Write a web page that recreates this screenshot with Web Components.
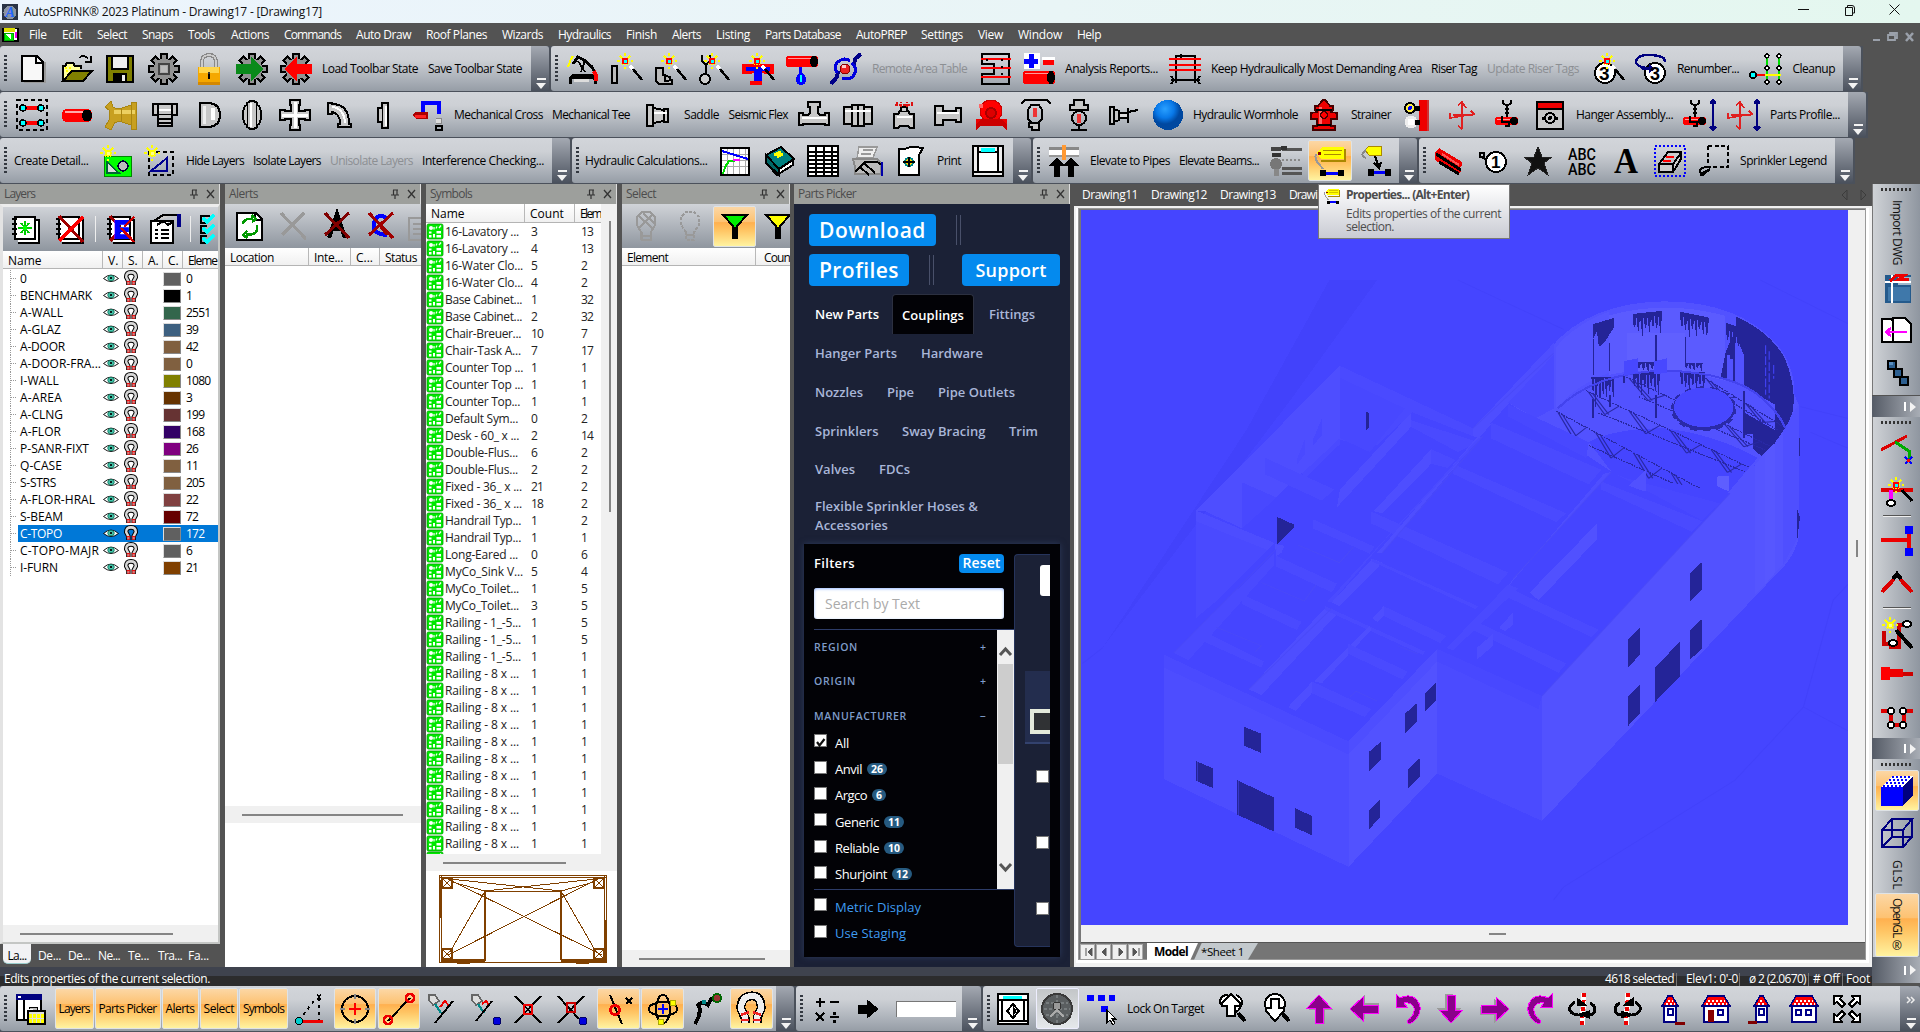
<!DOCTYPE html>
<html lang="en">
<head>
<meta charset="utf-8">
<title>AutoSPRINK</title>
<style>
html,body{margin:0;padding:0;width:1920px;height:1032px;overflow:hidden;background:#535353}
</style>
</head>
<body>
<sp-app></sp-app>
<script>
const FONT = 'font:12px/16px "Open Sans","Noto Sans",sans-serif;';
const P = (d,f='none',s='none',w=2,x='') => `<path d="${d}" fill="${f}" stroke="${s}" stroke-width="${w}" ${x}/>`;
const K = (d,f='none',w=2,x='') => P(d,f,'#000',w,x);
const C = (x,y,r,f='none',s='#000',w=2,e='') => `<circle cx="${x}" cy="${y}" r="${r}" fill="${f}" stroke="${s}" stroke-width="${w}" ${e}/>`;
const E = (x,y,a,b,f='none',s='#000',w=2) => `<ellipse cx="${x}" cy="${y}" rx="${a}" ry="${b}" fill="${f}" stroke="${s}" stroke-width="${w}"/>`;
const R = (x,y,w,h,f,s='none',k=2) => `<rect x="${x}" y="${y}" width="${w}" height="${h}" fill="${f}" stroke="${s}" stroke-width="${k}"/>`;
const burst = (x,y) => P(`M${x} ${y-8}V${y+8}M${x-8} ${y}H${x+8}M${x-5} ${y-5}L${x+5} ${y+5}M${x+5} ${y-5}L${x-5} ${y+5}`,'none','#ff0',2,'stroke-dasharray="3 1.5"')+R(x-3,y-3,6,6,'#f00')+R(x-1,y-1,3,3,'#0ff');
const wand = (x,y) => burst(x,y)+P(`M${x+5} ${y+5}L${x+8} ${y+8}`,'none','#fff',3)+K(`M${x+8} ${y+8}L${x+17} ${y+19}`,'none',2.5);
const teeth = [0,45,90,135,180,225,270,315].map(a=>`<path d="M13 7V1H19V7" fill="#929292" stroke="#000" stroke-width="1.800" transform="rotate(${a} 16 16)"/>`).join('');
const gear = teeth+C(16,16,9.5,'#929292','#929292',2);
const M = '#c8c8c8';
const pipe = (x,y,w,h=8) => `<rect x="${x}" y="${y}" width="${w}" height="${h}" rx="3" fill="#f00"/><rect x="${x+2}" y="${y+1.5}" width="${w-6}" height="1.6" fill="#f99"/><ellipse cx="${x+w-4}" cy="${y+h/2}" rx="4" ry="${h/2}" fill="#000"/>`;
const arrow = (rot) => `<g transform="rotate(${rot} 16 16)">${P('M17 3L30 17H22V31H14V17H6Z','#9a9a9a','none',1)}${P('M16 2L28 15H20V30H12V15H4Z','#8a008a','#f0f',1)}</g>`;
const hook = (m) => `<g ${m?'transform="matrix(-1 0 0 1 32 0)"':''}>${P('M4 11L4 1L8 5Q18 0 25 7Q31 15 26 23Q23 29 17 31Q14 29 16 27Q23 22 22 15Q20 9 12 10L15 14H4Z','#8a008a','#f0f',1)}</g>`;
const house = (x,w,extra='') => P(`M${x} 13V29H${x+w}V13`,'#fff','#000080',2)+P(`M${x-2} 13L${x+4} 3H${x+w-4}L${x+w+2} 13Z`,'#f00','#000080',1.5)+P(`M${x+2} 11H${x+w-1}M${x+4} 8H${x+w-3}`,'none','#fff',1.5,'stroke-dasharray="2 2"')+extra;
const book = K('M9 7H30V30H9','#fff')+K('M6 4H26V26H6Z','#fff')+K('M3 6H8M3 11H8M3 16H8M3 21H8');
const rx = P('M6 3L30 29','none','#a00000',3)+P('M30 4L6 28','none','#f00',3);
const hang = (dx=0) => `<g transform="translate(${dx} 0)">`+K('M12 1V4L16 7L20 4V1M16 7V21','none',2)+K('M14 10H18M14 14H18','none',1.5)+pipe(4,18,23,8)+K('M11 17V23H18V27H14','none',1.6)+'</g>';
const axes = (dx=0)=>P(`M${16+dx} 3V30M${4+dx} 19L${28+dx} 15M${7+dx} 16H${27+dx}M${12+dx} 6L${16+dx} 3L${20+dx} 9M${12+dx} 27L${16+dx} 30M${4+dx} 14V20M${25+dx} 12L${29+dx} 16`,'none','#e02020',1.6);
const dim = P('M29 1V31M26 4L29 1L32 4M26 28L29 31L32 28M26 28H32M26 4H32','none','#000080',1.8);
const pale = s => s.replace('#f00','#ff0').replace('#0ff','#ff8');
const I = {
new:P('M7 29H28V9','none','#999',2)+K('M5 3H20L26 9V28H5Z','#f8f8f8')+K('M19 3V10H26','none'),
open:K('M2 28V13H4L6 10H12L14 13H20V16','#ff9')+P('M4 15H12M5 18H10','none','#ff0',2,'stroke-dasharray="2 2"')+K('M2 28L11 18H31L22 28Z','#808000')+K('M18 5Q22 1 27 5M30 3V9H24','none',1.8),
save:K('M3 3H29V29H3Z','#808000')+K('M8 3H24V16H8Z','#eee')+R(9,20,14,9,'#000')+R(18,22,3,6,'#eee'),
gear:gear+R(11,11,10,10,'#aaa','#444',1.5)+R(13,13,6,6,'#bbb'),
lock:P('M9 15V9Q9 2 16 2T23 9V15','none','#888',4)+P('M9 15V9Q9 2 16 2T23 9V15','none','#ccc',1.5)+R(5,14,22,18,'#f5a800')+R(6,14,20,6,'#ffd54a')+R(5,29,22,3,'#d48800')+K('M16 20V26','none',2)+C(16,20,1.5,'#333','none'),
gearG:gear+P('M0 11H15V4L28 16L15 28V21H0Z','#0a8a1a','none'),
gearR:gear+P('M32 11H17V4L4 16L17 28V21H32Z','#f00','none'),
cart:K('M3 31V26L7 22H24L28 26V31','none',3)+R(7,25,15,4,'#ddd')+K('M3 24H27','none',3)+P('M1 14L4 6L6 3','none','#ff0',2)+K('M6 11L11 4L17 7L25 14L27 18','none',3)+K('M11 8L18 19M18 8L14 19','none',1.8)+P('M27 18L29 23V28','none','#f00',4),
wand1:K('M2 13H7V30H2Z','#bbb')+wand(15,8),
wand2:K('M2 15H9V22L16 24V27H18V31H6Q2 31 2 25Z','#bbb')+K('M11 21V28H15','none')+wand(15,8),
wand3:K('M4 2V8L8 12V20M12 2V8L8 12','none',1.6)+C(7,26,5,'#ccc')+wand(14,8),
wand4:P('M0 11H32V21H22V20H10V21H0Z','#f00')+P('M4 14H28V18H20V29H12V18H4Z','#00f')+R(8,28,12,4,'#f00')+wand(15,8),
drop:pipe(0,3,32,11)+P('M14 14V20','none','#00f',3)+P('M15 18Q9 24 10 28T15 32T20 28T15 18Z','#00f')+P('M15 22V29','none','#0ff',2),
orbit:P('M31 1L25 6L24 12M1 31L7 24L8 18','none','#008',4)+P('M7 20Q3 12 9 8T20 8M12 25Q20 28 24 22T22 10','none','#00d',3)+C(15,16,5,'#e22','#800',1)+R(12,12,4,3,'#fcc'),
sheets:K('M3 1H30V31H3V21H15V11H3Z')+P('M2 6H32M2 15H32M2 24H32','none','#f00',2)+K('M8 6V12M23 6V26','none',1.5,'stroke-dasharray="2 5"'),
plusmin:R(1,0,16,16,'#fff')+P('M8 1V15M1 8H15','none','#00f',5)+R(19,4,13,3,'#fff')+P('M20 9H31','none','#f00',5)+pipe(0,18,32,13),
demand:K('M7 30V3H26V30M12 1V6M2 27H31M2 23L5 27L2 31M31 23L28 27L31 31')+P('M0 6H32M0 12H32M0 17H32','none','#f00',1.8),
three:C(14,20,10,'#fff','#000')+'<text x="8" y="27" font-family="Liberation Sans" font-weight="bold" font-size="19">3</text>'+wand(16,8),
three2:P('M1 10Q1 1 16 2T30 9M1 10Q4 15 14 15','none','#000080',2.5)+C(20,20,10,'#fff','#000')+P('M4 14H14V11L20 16L14 20V17H8Z','#000080')+'<text x="15" y="27" font-family="Liberation Sans" font-weight="bold" font-size="18">3</text>',
cleanup:P('M16 4V28M28 4V28','none','#0d0',2)+P('M4 22H16','none','#f00',2.5)+P('M14 22H30','none','#ff0',2.5)+C(2,22,3,'#0ff','#000',1.5)+[[16,3],[28,3],[16,15],[28,15],[16,29],[28,29]].map(a=>C(a[0],a[1],2,'#fff','#000',1.2)).join(''),
selpipe:K('M1 1H31V31H1Z','none',2,'stroke-dasharray="4 3"')+P('M8 9H25M8 24H25','none','#f00',4)+[[7,9],[25,9],[7,24],[25,24]].map(a=>C(a[0],a[1],3,'#0ff','#000',1.4)).join(''),
pipe:`<rect x="1" y="10" width="30" height="13" rx="5" fill="#f00"/><rect x="4" y="12" width="20" height="2" fill="#faa"/><ellipse cx="26" cy="16.500" rx="5" ry="6" fill="#000"/>`,
brass:P('M8 8Q10 10 17 9L26 6V3H31V30H26V26L17 23Q10 22 9 25L6 31L0 28L4 21V11L0 8L6 2Z','#c8a020','#a98612',1)+P('M9 13H30','none','#ecd060',4)+P('M26 5V28M16 10V22','none','#a98612',1),
sleeve:K('M5 5H29V16H5Z',M)+K('M10 6V15M24 6V15M10 16V27H24V16M10 20H24M10 24H24',M)+R(11,10,12,2,'#fff'),
cap:K('M7 4H16Q27 5 27 16T16 28H7Z',M)+R(10,7,3,18,'#eee')+R(18,9,4,12,'#fff'),
disc:K('M11 4Q16 0 21 4V28Q16 32 11 28Z',M)+K('M11 6Q7 7 7 16T11 26M21 6Q25 7 25 16T21 26',M)+R(14,4,2,24,'#fff'),
cross:K('M11 1H21V6H20V12H26V11H31V21H26V20H20V26H21V31H11V26H12V20H6V21H1V11H6V12H12V6H11Z',M)+P('M16 3V29M3 16H29','none','#fff',3),
elbow:K('M4 4H8V5Q25 5 25 25H27V28H14V25H16Q16 14 8 13V15H4Z',M)+P('M8 8Q20 9 21 24','none','#fff',2),
flange:K('M14 4H20V29H14Z',M)+K('M14 9H10V23H14',M)+R(17,7,2,20,'#fff'),
uhook:P('M0 16L4 13H16V20H4Z','#a00')+P('M3 17H14','none','#f22',3)+P('M11 13V4H27V15','none','#00f',4)+K('M24 27H30V31H24Z','none',1.5)+P('M24 19H29V24H24','#ddd','#888',1),
coup:K('M6 6H12V27H6ZM12 9L23 11V22L12 24Z',M)+K('M23 10H27V23H23Z',M)+P('M13 14H26','none','#fff',2),
tee:K('M10 3H22V8H20V12Q20 16 24 16H27V14H31V26H27V25H5V26H1V14H5V16H8Q12 16 12 12V8H10Z',M)+P('M4 19H29','none','#fff',2.5),
reduc:K('M2 8H10V6H22V8H30V25H22V27H10V25H2Z',M)+K('M10 8V25M16 6V27M22 8V25','none',1.8)+P('M3 12H29','none','#fff',2),
valveR:K('M6 15H10L12 12H20L22 15H26V29H22L20 27H12L10 29H6Z',M)+K('M13 12V8H19V12',M)+P('M7 6H25M9 3V5M13 8V3M19 8V3M24 3V5','none','#d11',2,'stroke-dasharray="3 1"')+P('M9 18H24','none','#fff',2),
nipple:K('M3 7H11V12H24V9H29V23H24V21H11V26H3Z',M)+P('M5 14H27','none','#fff',2),
fan:C(15,12,11,'#f00','#c00',1)+R(0,20,31,5,'#e00')+P('M0 31V25L6 20H25L31 25V31L26 27H5Z','#c00')+C(15,14,5,'#d00','#a00',2)+R(3,5,4,4,'#f66'),
spk:K('M2 5L6 1H28L32 5M12 6H20L23 11V20L19 24H13L9 20V11Z','none')+R(14,9,4,9,'#e33')+K('M12 24H20V31H13V28H10V24Z',M),
spk2:K('M11 1H21V6H25V11H7V6H11Z',M)+C(16,19,7,'none')+R(14,15,4,9,'#e33')+K('M16 26V31M8 31H24','none'),
side:K('M4 8H8V25H4ZM8 10L13 12V21L8 23Z',M)+K('M13 14H22V19H13ZM22 9V24M22 13L32 11','#ddd'),
ball:'<defs><radialGradient id="b" cx=".4" cy=".3"><stop offset="0" stop-color="#2aa0ff"/><stop offset=".6" stop-color="#0878e8"/><stop offset="1" stop-color="#0048a0"/></radialGradient></defs>'+C(16,16,15,'url(#b)','none'),
hydrant:P('M10 7L13 3L15 1H17L19 3L22 7H25V11H23V13L29 14V20H23V27H27V31H5V27H9V20H3V14L9 13V11H7V7Z','#e00','#400',1.5)+R(11,8,3,18,'#f66')+C(16,16,3.5,'#f00','#400',1.5)+K('M8 11H24M9 26H23','none',1.2),
wall:R(16,1,10,31,'#e00')+R(24,1,2,31,'#c33')+C(7,9,5,'#fe4','#000',2)+C(7,9,2,'#00f','none')+C(8,23,5,'#fff','#eee',3)+R(12,7,5,5,'#000')+R(12,21,5,5,'#000'),
axes:axes(), hanger:hang(),
profile:K('M3 3H29V30H3Z','#c9c9c9')+R(4,4,24,6,'#e00')+K('M3 10H29')+C(16,19,5,'none','#000',1.8)+C(16,19,2,'#000','none')+K('M9 18V21M23 18V21','none',1.5),
hangdim:hang(-5)+dim, axesdim:axes(-4)+dim,
detail:R(4,11,27,20,'#0f0','#080',1)+P('M7 17V28H19Z','#ddd','#063',1.5)+C(23,21,5,'#bbb','#003',1.5)+pale(burst(8,8)),
region:K('M5 7H29V30H5Z','none',2,'stroke-dasharray="4 3"')+P('M7 26L23 13V26Z','none','#000090',2)+pale(burst(8,8)),
graph:K('M2 3H30V30H2Z','#fff')+P('M8 4V29M14 4V29M20 4V29M26 4V29M3 9H29M3 15H29M3 21H29','none','#aaa',1)+P('M3 6L29 14','none','#00f',2)+P('M4 29L6 22L10 16H16','none','#0d0',2)+P('M14 15H21','none','#f0f',2),
book2:K('M3 10L18 2L31 14L16 24Z','#008080')+K('M3 10V18L14 30L30 20V15L16 24Z','#fff')+K('M3 10L16 24V30L3 18Z','#066')+P('M11 10L18 7M14 12L20 9','none','#ff0',3),
table:K('M1 1H31V31H1Z','#fff')+K('M1 7H31M1 11H31M1 15H31M1 19H31M1 23H31M1 27H31M9 1V31M17 1V31M25 1V31','none',1.6),
printer:P('M8 2H26L22 13H6Z','#eee','#999',1.5)+P('M12 5H22M10 9H20','none','#999',1.5)+P('M2 14H26L30 18V29H4V22Z','#bbb','#888',2)+K('M4 27L14 17H26L31 20M9 22L18 30M13 18L24 28','none',2)+P('M31 17V31','none','#00a',2),
doc3:K('M4 4H10Q14 1 28 3L24 10V30H4Z','#fff')+C(14,17,4,'#fc0','#088',2)+K('M8 17H20M14 12V22','none',1.5),
frame:K('M1 1H31V31H1Z','#eee')+K('M6 7H26V27H6ZM6 1V7M26 1V7M1 27H31','#fff')+R(9,3,14,4,'#0ff'),
elevp:R(1,2,30,3,'#888')+R(1,5,30,5,'#fff')+R(1,10,30,2,'#999')+R(14,0,4,15,'#f93')+K('M7 31V20H3L9 14L15 20H11V31ZM21 31V20H17L23 14L29 20H25V31Z','#000',2),
elevb:R(1,2,10,4,'#444')+R(2,8,9,4,'#333')+C(6,19,6,'#777','none')+R(4,24,5,7,'#888')+P('M12 4H32M12 28H32M12 23H32','none','#555',3)+P('M12 15H32','none','#888',2,'stroke-dasharray="2 2"')+R(11,1,6,4,'#333'),
props:P('M3 8L8 2H30V14H7Z','#ff0')+P('M7 16H31V4','none','#a80',2)+P('M9 5H28M10 9H27','none','#a80',1)+R(4,7,3,3,'#800')+P('M2 9Q0 14 5 19L9 24','none','#999',2)+P('M8 28H26','none','#00f',3)+R(6,25,6,6,'#000')+R(24,25,6,6,'#000'),
props2:P('M4 5L8 1H20V10H8Z','#ff0','#a80',1)+P('M5 5Q-2 10 5 13','none','#888',2)+K('M14 11L18 23M13 18L18 23L20 17','none')+P('M10 27H26','none','#00f',3)+R(7,24,6,7,'#000')+R(24,24,6,7,'#000'),
beam:P('M2 8L6 3L29 17V21L26 22L28 27L25 29L2 15Z','#e00')+K('M3 9L28 25M6 17L26 29','none',3)+P('M9 9L26 20','none','#f55',2),
tag1:K('M2 12H7V8H3V12Q6 12 9 15','none',2)+C(19,17,10,'#fff')+'<text x="14" y="23" font-family="Liberation Sans" font-weight="bold" font-size="17">1</text>',
star:P('M16 2L20 12H30L22 18L26 30L16 23L6 30L10 18L2 12H12Z','#111','#222',1),
abc:'<text x="2" y="15" font-family="Roboto" font-weight="500" font-size="17" textLength="28" lengthAdjust="spacingAndGlyphs">ABC</text><text x="2" y="30" font-family="Roboto" font-weight="500" font-size="17" textLength="28" lengthAdjust="spacingAndGlyphs">ABC</text>',
A:'<text x="4" y="28" font-family="Liberation Serif" font-weight="bold" font-size="35" textLength="24" lengthAdjust="spacingAndGlyphs">A</text>',
boxsel:P('M1 1H31V31H1Z','none','#00f',2,'stroke-dasharray="2 2"')+K('M5 19L14 7H27V14L19 27H5ZM5 19H19L27 8M19 19V27','#ccc')+P('M12 12H20M9 16H17','none','#f00',2.5),
lasso:K('M10 1H30V22H10V1','none',2.2,'stroke-dasharray="4 2.5"')+K('M10 22Q2 22 2 26T10 25M2 30H5L12 24','none',2),
panes:K('M2 2H26V27H2Z','#fff')+R(1,1,26,6,'#000080')+R(3,3,3,2,'#fff')+K('M9 7V27M13 18H30V31H13Z','#ddd')+P('M14 23H29M14 28H29','none','#ff0',4,'stroke-dasharray="3 1"')+K('M14 16V14H22V17','#bbb',1),
ang:K('M5 27L20 8M25 5V27','none',2,'stroke-dasharray="3 4"')+P('M6 28H29','none','#e00',3)+C(5,28,3.5,'#0cc','#000',1)+K('M23 1L27 7M27 1L23 7','none',1.3),
cir:C(16,16,13)+P('M16 10V22M10 16H22','none','#f00',2.5)+P('M16 1V6M16 26V31M1 16H6M26 16H31','none','#888',1.5),
lin:K('M5 28L27 5')+C(5,27,4,'none','#e00',2.5)+C(27,5,4,'none','#e00',2.5),
pli:P('M2 2H8L12 8L6 12L2 7Z','#ddd','#666',1.5)+P('M8 11L14 20','none','#088',2)+P('M13 14L18 8L22 13','none','#e00',2)+K('M8 30L26 8'),
plib:P('M2 2H8L12 8L6 12L2 7Z','#ddd','#666',1.5)+P('M8 11L14 20','none','#088',2)+P('M12 11L16 8L19 12','none','#e00',2)+K('M6 28L22 8')+C(27,28,4,'#00d','#006',1),
xx:K('M3 3L29 30M29 3L3 30')+R(12,12,8,9,'none','#e00',2.5),
xxb:K('M3 3L24 26M29 3L3 30')+R(12,10,8,9,'none','#c00',2)+C(28,28,4,'#00d','#006',1),
perp:K('M8 2L20 31')+C(13,17,4.5,'none','#e00',3)+K('M24 5L30 11M30 5L24 11','none',2),
orb:E(16,16,14,7)+E(16,16,7,14)+P('M16 11V21M11 16H21','none','#00f',2.5)+C(26,10,3,'#ff0','#aa0',1)+C(14,29,3,'#ff0','#aa0',1),
snake:K('M4 31L8 23L9 16L7 12L12 9L17 12L20 6L26 5','none',4)+C(26,5,4,'#933','#060',2)+R(11,7,4,4,'#088'),
mag:K('M10 30V25L6 16Q5 4 16 3T26 16L22 25V30','none',9)+P('M10 30V24L6 16Q6 4 16 3T26 16L22 24V30','none','#eee',6)+P('M6 22L14 19M6 27H14M26 22L18 19M26 27H18','none','#e22',2.5),
math:K('M5 9H14M9 5V14M19 9H28M5 20L13 28M13 20L5 28M19 24H28','none',2)+R(22,19,3,3,'#000')+R(22,27,3,3,'#000'),
barrow:K('M6 12H15V7L26 16L15 25V20H6Z','#000',1),
pframe:K('M1 1H31V31H1Z','#fff')+R(6,3,19,4,'#0ff')+K('M5 7H27V28H5ZM1 7H31','none')+K('M16 11L22 18L16 25L10 18Z','#fff')+K('M16 13L19 18L16 23Z','#000',1)+K('M1 28H31','none',1.5),
wheel:E(16,16,15,15,'#5a5e60','#3a3a3a',2)+P('M5 10H27M3 16H29M5 22H27M16 2V30','none','#777c7e',1.5,'stroke-dasharray="3 2"')+C(16,13,4,'#999','#333',1)+P('M9 24L16 17L23 24','none','#aaa',2),
lock4:R(0,2,7,6,'#00f')+R(11,2,7,6,'#00f')+R(22,2,6,6,'#00f')+R(14,13,7,6,'#00f')+K('M20 17V30L23 27L26 32L28 30L25 26H29Z','#fff',1.2),
zin:K('M11 13Q5 13 5 8Q6 2 13 2M21 2Q27 4 27 10Q26 16 21 19','#fff',2)+K('M16 1L25 10V13H20V23H12V13H7V10Z','#fff')+K('M23 20L30 28','none',4),
zout:C(16,11,10,'#fff','#000',2)+K('M12 6H20V15H25V18L16 28L7 18V15H12Z','#fff')+K('M23 20L30 28','none',4),
up:arrow(0),left:arrow(-90),down:arrow(180),right:arrow(90),undo:hook(0),redo:hook(1),
turn:P('M15 32L17 0','none','#fff',5)+P('M15 32L17 0','none','#e00',4,'stroke-dasharray="4 3"')+K('M8 9Q0 14 4 19T26 21Q31 14 23 10','none',3)+K('M10 5V12L19 12Z','#000',1)+K('M22 25V18L12 21Z','#000',1),
turn2:P('M15 32L17 0','none','#fff',5)+P('M15 32L17 0','none','#e00',4,'stroke-dasharray="4 3"')+K('M24 9Q32 14 28 19T6 21Q1 14 9 10','none',3)+K('M22 5V12L13 12Z','#000',1)+K('M10 25V18L20 21Z','#000',1),
h1:house(9,12,R(13,16,5,6,'#fff','#008')+P('M20 29H29V31H20Z','#800000','#800000',1)),
h2:house(4,24,R(8,17,6,12,'#800')+R(18,17,5,5,'#fff','#008')),
h3:house(11,11,R(14,16,5,6,'#fff','#008')+P('M3 29H12','none','#800000',3)),
h4:house(4,24,R(8,17,5,5,'#fff','#008')+R(18,17,5,5,'#fff','#008')),
ext:K('M3 3H11L9 6L14 11L11 14L6 9L3 11ZM29 3H21L23 6L18 11L21 14L26 9L29 11ZM3 29H11L9 26L14 21L11 18L6 23L3 21ZM29 29H21L23 26L18 21L21 18L26 23L29 21Z','#fff',1.8),
dwg:R(4,2,26,28,'#245a8c')+R(7,14,22,14,'#3f78aa')+R(17,4,13,8,'#9fb8cc')+P('M4 9H30M11 2V30','none','#fff',2.5)+P('M9 8L16 2H24L18 6H28','none','#e00',3),
docs:K('M1 4H10L14 9V27H1Z','#fff')+K('M12 3H24L30 9V27H12Z','#fff')+P('M5 17H26M10 13L5 17L10 21','none','#f0f',2.5),
cubes:K('M7 4H15V12H7ZM13 12H21V20H13ZM19 20H27V28H19Z','#2d5f90',2.2)+R(8,5,4,3,'#5a8fc0'),
s1:P('M0 17L26 3','none','#d00',3)+P('M14 9L28 18V26','none','#0a0',3)+P('M24 24L31 31M31 24L24 31','none','#00f',2.5)+R(26,26,3,3,'#f00'),
s2:P('M0 15H32','none','#d00',4)+burst(15,10)+P('M10 15V25','none','#f0f',4)+E(10,28,4,3,'#fff')+K('M21 15L31 26','none',3),
s3:P('M0 16H28M28 5V28','none','#e00',4)+R(24,2,8,8,'#00f')+R(24,24,8,8,'#00f'),
s4:P('M1 25L13 12M19 12L31 25','none','#d00',4)+K('M12 12L16 7L20 12','none',4),
s5:P('M3 14V27H10V30H18V8H26','none','#c00',4)+pale(burst(9,8))+E(26,7,4,3,'#fff')+E(12,26,4,3,'#fff')+K('M15 13L31 31','none',4),
s6:R(0,9,9,13,'#f00')+R(9,11,13,8,'#e00')+R(22,14,10,4,'#c00'),
s7:P('M0 9H8M24 9H32M10 11V23H23V11','none','#d00',4)+[[10,9],[22,9],[10,23],[22,23]].map(a=>E(a[0],a[1],3.5,3,'#fff')).join(''),
solid:P('M0 12L11 1H32L22 12Z','#fff')+P('M2 11H22M5 8H25M8 5H28M11 2H31','none','#00f',2,'stroke-dasharray="2 2"')+R(0,12,22,19,'#00f')+P('M22 12L32 1V20L22 31Z','#000080'),
wire:P('M1 13H22V30H1ZM1 13L11 2H31L22 13M31 2V20L22 30M11 2V20H31M11 20L1 30','none','#000080',2),
bnew:book+P('M16 8V22M9 15H23M12 10L20 20M20 10L12 20','none','#0c0',2)+C(16,15,2.5,'#0f0','none'),
bdel:book+rx, bE:book+P('M6 3L16 14M6 28L16 18','none','#a00000',3)+'<text x="10" y="25" font-family="Liberation Sans" font-weight="bold" font-size="24" fill="#00f" stroke="#00f" stroke-width="2">E</text>'+P('M17 15L30 29M30 4L20 14','none','#d00000',2.5),
plist:K('M2 8H24V30H2Z','#fff')+K('M5 8L14 2H28M8 12L14 8L19 12L25 8','#ccc',2)+K('M6 17H9M12 17H20M6 21H9M12 21H20M6 25H9M12 25H20','none',1.8)+P('M30 1V14','none','#008',4),
chk:K('M11 3H2V10H8M8 13H2V20H8M8 23H2V30H8')+P('M4 5L8 9L15 2M4 15L8 19L15 12M4 25L8 29L15 22','none','#0ff',3),
refresh:K('M3 3H22L28 9V30H3Z','#fff')+K('M21 3V10H28')+P('M9 14Q10 8 18 9V6M23 15V20Q21 26 13 24V28M18 12L22 9L18 5M13 21L9 25L13 28','none','#090',2.5),
gx:P('M4 3L28 28M27 3L5 25','none','#999',3)+C(28,29,1,'#999','none'),
ax:K('M8 28L16 4L24 28M12 19H20','none',4)+P('M4 3L28 28M28 3L4 25','none','#800000',3),
cx:P('M22 8Q12 2 9 13T22 25','none','#00f',4)+P('M14 14L22 25M4 3L28 28M28 3L4 25','none','#a00000',3),
glist:P('M2 8H24V30H2ZM6 14H20M6 19H20M6 24H20','none','#999',2),
bulb:P('M11 22L7 15V7L12 2H20L25 7V15L21 22V30H12V22','none','#999',2)+P('M11 22V30M9 6L22 18M13 3L24 13M22 5L9 18M12 26H21','none','#999',2),
bulb2:P('M12 22L7 15V7L12 2H20L25 7V15L20 22V30H12V22','none','#999',2,'stroke-dasharray="3 1.5"')+P('M12 25H20','none','#999',2),
fg:K('M4 5H28L18 16V28H14V16Z','#0e0')+R(14,17,4,12,'#000')+R(4,4,24,2,'#000'),
fy:K('M4 5H28L18 16V28H14V16Z','#ff0')+R(14,17,4,12,'#000')+R(4,4,24,2,'#000'),
eye:`<g shape-rendering="auto">`+K('M1 16Q16 -1 31 16Q16 31 1 16Z','#fff',2)+C(16,15,6.5,'#4cc9b0','#0a7a60',2)+C(16,15,2.5,'#000','none')+'</g>',
lmag:`<g shape-rendering="auto">`+K('M10 30V22L5 13Q5 3 16 3T27 13L22 22V30','none',10)+P('M10 29V22L5 13Q5 3 16 3T27 13L22 22V29','none','#d8d8d8',5.5)+P('M6 23H14M18 23H26M7 28H14M18 28H25','none','#e11',3)+'</g>',
sym:'<g shape-rendering="auto">'+`<rect x="0" y="0" width="32" height="30" rx="3" fill="#00e800" stroke="#009a00" stroke-width="1.500"/>`+C(8,8,4,'#fff','none')+R(4,15,5,4,'#fff')+R(4,22,5,5,'#fff')+R(12,20,4,7,'#fff')+R(19,14,9,5,'#fff')+R(19,22,9,5,'#fff')+P('M14 6V11M20 5L18 9M28 3L24 8','none','#fff',2.500)+'</g>',
app:R(0,0,32,32,'#2a3346')+C(16,17,13,'#8a93a3','none')+'<text x="7" y="25" font-family="Liberation Serif" font-style="italic" font-weight="bold" font-size="28" fill="#26f">A</text>',
doc:K('M2 3H30V30H2Z','#fff',2.5)+R(4,2,20,9,'#dd0')+R(4,13,18,16,'#0e0','#080',1.5)+P('M7 15L17 27V15Z','#fff')+P('M26 11V24','none','#e0e',4),
};

function def(tag, css, html, after){
  customElements.define(tag, class extends HTMLElement{
    connectedCallback(){
      if(this.shadowRoot) return;
      const r=this.attachShadow({mode:'open'});
      r.innerHTML='<style>'+css+'</style>'+(typeof html==='function'?html(this):html);
      if(after) after(this,r);
    }
  });
}

def('sp-icon',':host{display:block;flex:none}svg{display:block;overflow:visible;shape-rendering:crispEdges}',
 e=>{const s=e.getAttribute('s')||32,h=e.getAttribute('h')||s;return `<svg width="${s}" height="${h}" viewBox="0 0 32 32" preserveAspectRatio="none">${I[e.getAttribute('n')]}</svg>`});

/* label whose tracking is adjusted so that it fills the width w */
def('sp-fit',':host{display:block;flex:none;white-space:pre}span{display:inline-block}','<span><slot></slot></span>',(e,r)=>{
  const v=e.hasAttribute('v'),w=+e.getAttribute('w'),s=r.querySelector('span'),n=e.textContent.length;
  const b=s.getBoundingClientRect(),m=v?b.height:b.width;
  s.style.letterSpacing=((w-m)/n).toFixed(3)+'px';
  if(v) e.style.height=w+'px'; else e.style.width=w+'px';
});
const fit=(x0,x1,t,st='',v='')=>`<sp-fit ${v} w="${+(x1-x0).toFixed(2)}" style="${st}">${t}</sp-fit>`;
/* rows are described by absolute starts; the gaps become margins */
function flow(start,items){
  let p=start,o='';
  for(const i of items){
    const k=i[0]; let a,b,h;
    if(k==='i'){a=i[1]-16;b=i[1]+16;h=m=>`<sp-icon n="${i[2]}" style="margin-left:${m}px"></sp-icon>`}
    if(k==='t'||k==='d'){a=i[1];b=i[2];h=m=>fit(a,b,i[3],`margin-left:${m}px;${k==='d'?'color:#8c8f93':''}`)}
    if(k==='b'||k==='g'){a=i[1];b=i[2];h=m=>`<div class="btn ${k}" style="margin-left:${m}px;width:${(b-a).toFixed(1)}px">${I[i[3]]?`<sp-icon n="${i[3]}"></sp-icon>`:fit(0,b-a-8,i[3])}</div>`}
    if(k==='w'){a=i[1];b=i[2];h=m=>`<div style="margin-left:${m}px;width:${b-a}px;height:16px;background:#fff;border-left:1px solid #777;border-top:1px solid #777;box-sizing:border-box"></div>`}
    o+=h((a-p).toFixed(1)); p=b;
  }
  return o;
}
const BARS={
r1a:[0,531,549,[['i',33,'new'],['i',77,'open'],['i',120,'save'],['i',164,'gear'],['i',209,'lock'],['i',252,'gearG'],['i',296,'gearR'],['t',322,418,'Load Toolbar State'],['t',428,522,'Save Toolbar State']]],
r1b:[551,1843,1861,[['i',583,'cart'],['i',626,'wand1'],['i',670,'wand2'],['i',714,'wand3'],['i',758,'wand4'],['i',802,'drop'],['i',846,'orbit'],['d',872,967,'Remote Area Table'],['i',995,'sheets'],['i',1039,'plusmin'],['t',1065,1158,'Analysis Reports...'],['i',1185,'demand'],['t',1211,1422,'Keep Hydraulically Most Demanding Area'],['t',1431,1477,'Riser Tag'],['d',1487,1579,'Update Riser Tags'],['i',1607,'three'],['i',1651,'three2'],['t',1677,1739,'Renumber...'],['i',1767,'cleanup'],['t',1792.5,1835,'Cleanup']]],
r2:[0,1848,1866,[['i',32,'selpipe'],['i',77,'pipe'],['i',121,'brass'],['i',164,'sleeve'],['i',209,'cap'],['i',252,'disc'],['i',295,'cross'],['i',340,'elbow'],['i',384,'flange'],['i',428,'uhook'],['t',454,543,'Mechanical Cross'],['t',552,630,'Mechanical Tee'],['i',657,'coup'],['t',684,719,'Saddle'],['t',728.5,788,'Seismic Flex'],['i',814,'tee'],['i',858,'reduc'],['i',904,'valveR'],['i',948,'nipple'],['i',992,'fan'],['i',1035,'spk'],['i',1079,'spk2'],['i',1122,'side'],['i',1168,'ball'],['t',1193,1298,'Hydraulic Wormhole'],['i',1324,'hydrant'],['t',1351,1391,'Strainer'],['i',1419,'wall'],['i',1462,'axes'],['i',1507,'hanger'],['i',1550,'profile'],['t',1576,1673,'Hanger Assembly...'],['i',1700,'hangdim'],['i',1744,'axesdim'],['t',1770,1840,'Parts Profile...']]],
r3a:[0,552,570,[['t',14,88.5,'Create Detail...'],['i',116,'detail'],['i',160,'region'],['t',186,244,'Hide Layers'],['t',253,321,'Isolate Layers'],['d',330,413,'Unisolate Layers'],['t',422,544,'Interference Checking...']]],
r3b:[572,1013,1031,[['t',585,707.5,'Hydraulic Calculations...'],['i',735,'graph'],['i',779,'book2'],['i',823,'table'],['i',867,'printer'],['i',911,'doc3'],['t',937,961,'Print'],['i',988,'frame']]],
r3c:[1033,1399,1417,[['i',1064,'elevp'],['t',1090,1170,'Elevate to Pipes'],['t',1179,1259,'Elevate Beams...'],['i',1286,'elevb'],['b',1308,1351.5,'props'],['i',1377,'props2']]],
r3d:[1419,1835,1853,[['i',1449,'beam'],['i',1493,'tag1'],['i',1538,'star'],['i',1582,'abc'],['i',1626,'A'],['i',1670,'boxsel'],['i',1714,'lasso'],['t',1740,1827,'Sprinkler Legend']]],
b1:[0,776,794,[['i',31,'panes'],['b',54.5,93.5,'Layers'],['b',94.5,160.5,'Parts Picker'],['b',161.5,198.5,'Alerts'],['b',199.5,238,'Select'],['b',239,288,'Symbols'],['i',310,'ang'],['b',333.5,376,'cir'],['b',377.5,420,'lin'],['i',443,'pli'],['i',486,'plib'],['i',528,'xx'],['i',571,'xxb'],['b',597,639.5,'perp'],['b',641,684,'orb'],['i',707,'snake'],['b',730,772.5,'mag']]],
b2:[796,962,981,[['i',827,'math'],['i',868,'barrow'],['w',896,956]]],
b3:[983,1900,1920,[['i',1013,'pframe'],['g',1036,1078.5,'wheel'],['i',1103,'lock4'],['t',1127,1204,'Lock On Target'],['i',1231,'zin'],['i',1275,'zout'],['i',1319,'up'],['i',1364,'left'],['i',1408,'undo'],['i',1451,'down'],['i',1495,'right'],['i',1540,'redo'],['i',1583,'turn'],['i',1627,'turn2'],['i',1671,'h1'],['i',1716,'h2'],['i',1761,'h3'],['i',1804,'h4'],['i',1847,'ext']]],
};
const BTN='.btn{height:41px;flex:none;box-sizing:border-box;border:1px solid #dfe3e6;border-radius:2px;display:flex;align-items:center;justify-content:center;background:linear-gradient(#fcd7a5 0,#fdc272 38%,#ffb04f 40%,#ffc564 60%,#fff3a0 100%)}.btn.g{background:linear-gradient(#c3c6c8,#e5e8eb);border-color:#eef}';
def('sp-toolbar',`:host{display:flex;height:45px;${FONT}color:#000;flex:none}
.bar{display:flex;align-items:center;background:linear-gradient(#d2d5da 0,#cdd0d5 30%,#b6bbc2 60%,#969da6 100%);flex:none;border-radius:3px 0 0 3px}
.grip{width:3px;height:28px;margin-left:4px;flex:none;background:repeating-linear-gradient(#333840 0 2px,transparent 2px 4px)}
.ov{display:flex;flex-direction:column;align-items:center;justify-content:flex-end;gap:3px;background:linear-gradient(#a4a9b2,#4a515d);border-radius:0 3px 3px 0;padding:0 0 2px 2px;box-sizing:border-box}
.ov i{width:9px;height:2px;background:#f3f3f3}.ov b{width:0;border:5px solid transparent;border-top:6px solid #f3f3f3;border-bottom:0}.ov em{font:bold 9px/9px "Liberation Sans";color:#eee;margin-bottom:9px}`+BTN,
e=>{const n=e.getAttribute('n'),[a,b,o,it]=BARS[n];return `<div class="bar" style="width:${b-a}px"><div class="grip"></div>${flow(a+7,it)}</div><div class="ov" style="width:${o-b}px">${n==='b3'?'<svg width="10" height="8" style="margin-bottom:11px"><path d="M1 1L4 4L1 7M5 1L8 4L5 7" fill="none" stroke="#eee" stroke-width="1.500"/></svg>':''}<i></i><b></b></div>`});

def('sp-titlebar',`:host{display:flex;height:23px;align-items:center;background:linear-gradient(90deg,#ecf4fd,#e9f5f6 55%,#e4f7ef);${FONT}color:#111;padding-left:2px}svg{display:block}.c{margin-left:auto;display:flex;gap:33px;padding-right:20px;margin-top:-3px}`,
`<sp-icon n="app" s="16"></sp-icon>${fit(0,298,'AutoSPRINK® 2023 Platinum - Drawing17 - [Drawing17]','margin-left:6px')}
<div class="c"><svg width="11" height="11"><path d="M0 5.500H11" stroke="#111"/></svg><svg width="12" height="12" style="margin-left:2px"><path d="M1.500 3.500H8.500V11.500H1.500ZM3.500 3V1.500H8Q10.500 1.500 10.500 4V9H9" fill="none" stroke="#111"/></svg><svg width="11" height="11"><path d="M.5 .5L10.500 10.500M10.500 .5L.5 10.500" stroke="#111"/></svg></div>`);
const MENU=[['t',29,46.500,'File'],['t',62,82,'Edit'],['t',97,127,'Select'],['t',142,173,'Snaps'],['t',188,214.500,'Tools'],['t',231,269,'Actions'],['t',284,341,'Commands'],['t',356,411,'Auto Draw'],['t',426,487,'Roof Planes'],['t',502,543,'Wizards'],['t',558,611,'Hydraulics'],['t',626,657,'Finish'],['t',672,701,'Alerts'],['t',716,750,'Listing'],['t',765,841,'Parts Database'],['t',856,907,'AutoPREP'],['t',921,963,'Settings'],['t',978,1003,'View'],['t',1018,1062,'Window'],['t',1077,1101,'Help']];
def('sp-menubar',`:host{display:flex;height:23px;align-items:center;background:#535353;${FONT}color:#fff;padding-left:2px}svg{margin-left:auto;margin-right:4px;margin-top:5px}`,
`<sp-icon n="doc" s="17" h="15"></sp-icon>${flow(19,MENU)}<svg width="43" height="10"><path d="M0 8H7M15 3H22V8H15ZM17 3V1H24V6H22" fill="none" stroke="#9aa0aa" stroke-width="1.800"/><path d="M33 1L40 9M40 1L33 9" stroke="#9aa0aa" stroke-width="2.500"/></svg>`);
def('sp-band',':host{display:flex;gap:2px;height:46px;background:#4b515b}:host::after{content:"";flex:1;background:#535353}','<slot></slot>');

/* docked panel with caption */
def('sp-panel',`:host{display:flex;flex-direction:column;flex:none;overflow:hidden;${FONT}color:#000;background:#fff}
.cap{height:20px;flex:none;display:flex;align-items:center;background:#9d9f9c;color:#4c4c4c;padding:0 4px 1px 4px;box-sizing:border-box;border-right:1px solid #ddd}svg{margin-left:auto}`,
e=>`<div class="cap">${fit(0,+e.getAttribute('cw'),e.getAttribute('cap'))}<svg width="25" height="10"><path d="M2 1H7M2.500 1V6M6 1V6M0 6H8M4 6V10" fill="none" stroke="#333" stroke-width="1.200"/><path d="M17 1L24 9M24 1L17 9" stroke="#333" stroke-width="1.300"/></svg></div><slot></slot>`);
def('sp-hscroll',':host{display:flex;align-items:center;height:17px;background:#f0f0f0;flex:none}i{height:2px;background:#858585}',e=>`<i style="margin-left:${e.getAttribute('a')}px;width:${e.getAttribute('l')}px"></i>`);
const PB=`.tb{display:flex;align-items:center;height:44px;flex:none;background:linear-gradient(#d0d3d8,#8f969f);overflow:hidden}.hd{display:flex;height:18px;flex:none;background:linear-gradient(#fff,#f0f0f0);border-bottom:1px solid #b4b4b4;box-sizing:border-box;overflow:hidden;line-height:19px}.hd span{border-right:1px solid #b8b8b8;box-sizing:border-box;flex:none;padding-left:5px;white-space:nowrap;overflow:hidden}${BTN}.sep{width:1px;height:26px;background:#eee;flex:none}`;
const LY=`0|#606060|0|5
BENCHMARK|#000|1|72
A-WALL|#33664c|2551|43
A-GLAZ|#3d6080|39|41
A-DOOR|#806040|42|45
A-DOOR-FRA...|#806040|0|81
I-WALL|#808000|1080|39
A-AREA|#663300|3|42
A-CLNG|#663333|199|43
A-FLOR|#330066|168|41
P-SANR-FIXT|#800080|26|69
Q-CASE|#806040|11|42
S-STRS|#806040|205|36
A-FLOR-HRAL|#804040|22|75
S-BEAM|#660000|72|43
C-TOPO|#606060|172|42
C-TOPO-MAJR|#606060|6|79
I-FURN|#804000|21|38`.split('\n').map(r=>r.split('|'));
def('sp-layers',PB+`:host{display:flex;flex-direction:column;height:763px;background:#535353}.in{display:flex;flex-direction:column;height:740px;border:2px solid #c4c6c4;border-top:3px solid #ececec;border-left:3px solid #e3e3e3;box-sizing:border-box;background:#fff;width:220px;flex:none}
.rows{display:flex;flex-direction:column;height:656px;padding-top:1px;box-sizing:border-box}.r{display:flex;height:17px;align-items:center;flex:none}.t{width:9px;height:17px;margin-left:7px;box-sizing:border-box;border-left:1px dotted #999;background:repeating-linear-gradient(90deg,#999 0 1px,#fff 1px 2px) 0 8px/6px 1px no-repeat;margin-right:-1px}.r .n{display:flex;align-items:center;height:17px;flex:1;padding-left:2px}.sel .n{background:#0078d7;color:#fff}.nm{width:82px;flex:none;white-space:nowrap}.sw{width:18px;height:14px;box-sizing:border-box;border:1px solid #888;border-top-color:#ddd;border-left-color:#ddd;flex:none;margin-left:25px;margin-right:5px}
.tabs{display:flex;color:#fff;height:23px;line-height:23px;padding-left:3px}.tabs b{font-weight:400;color:#000;background:#f2f2f4;width:17px;width:28px;height:20px;border-radius:0 0 5px 5px;border-bottom:1px solid #9cc;box-sizing:border-box;flex:none;display:flex;justify-content:center}`,
`<div class="in"><div class="tb"><sp-icon n="bnew" style="margin-left:6px"></sp-icon><sp-icon n="bdel" style="margin-left:12px"></sp-icon><div class="sep" style="margin:0 8px 0 10px"></div><sp-icon n="bE"></sp-icon><sp-icon n="plist" style="margin-left:13px"></sp-icon><div class="sep" style="margin:0 8px 0 9px"></div><sp-icon n="chk"></sp-icon></div>
<div class="hd"><span style="width:100px">Name</span><span style="width:20px">V.</span><span style="width:20px">S.</span><span style="width:20px">A.</span><span style="width:20px">C.</span><span style="width:35px;border:0">${fit(0,29,'Eleme')}</span></div>
<div class="rows">${LY.map((r,i)=>`<div class="r ${i==15?'sel':''}"><div class="t"></div><div class="n">${'<div class="nm">'+fit(0,+r[3],r[0])+'</div>'}<sp-icon n="eye" s="16" h="13" style="margin:-1px 0 0 1px"></sp-icon><sp-icon n="lmag" s="14" h="15" style="margin-left:5px"></sp-icon><div class="sw" style="background:${r[1]}"></div>${fit(0,r[2].length*6.1,r[2])}</div></div>`).join('')}</div><sp-hscroll a="17" l="153"></sp-hscroll></div>
<div class="tabs"><b>${fit(0,19,'La...')}</b>${flow(31,[['t',38,61,'De...'],['t',68,90,'De...'],['t',98,120,'Ne...'],['t',128,149,'Te...'],['t',158,182,'Tra...'],['t',188,209,'Fa...']])}</div>`);
def('sp-alerts',PB+':host{display:flex;flex-direction:column;width:196px}.w{height:540px;flex:none}',
`<div class="tb"><sp-icon n="refresh" style="margin-left:9px"></sp-icon><sp-icon n="gx" style="margin-left:11px"></sp-icon><sp-icon n="ax" style="margin-left:12px"></sp-icon><sp-icon n="cx" style="margin-left:12px"></sp-icon><sp-icon n="glist" style="margin-left:10px"></sp-icon></div><div class="hd"><span style="width:84px">${fit(0,44,'Location')}</span><span style="width:42px">${fit(0,29,'Inte...')}</span><span style="width:29px">C...</span><span style="width:45px;border:0">${fit(0,32,'Status')}</span></div><div class="w"></div><sp-hscroll a="17" l="161"></sp-hscroll>`);
const SY=`16-Lavatory ...|3|13|74;16-Lavatory ...|4|13|74;16-Water Clo...|5|2|78;16-Water Clo...|4|2|78;Base Cabinet...|1|32|77;Base Cabinet...|2|32|77;Chair-Breuer...|10|7|76;Chair-Task A...|7|17|76;Counter Top ...|1|1|78;Counter Top ...|1|1|78;Counter Top...|1|1|75;Default Sym...|0|2|73;Desk - 60_ x ...|2|14|74;Double-Flus...|6|2|73;Double-Flus...|2|2|73;Fixed - 36_ x ...|21|2|77;Fixed - 36_ x ...|18|2|77;Handrail Typ...|1|2|76;Handrail Typ...|1|1|76;Long-Eared ...|0|6|73;MyCo_Sink V...|5|4|78;MyCo_Toilet...|1|5|74;MyCo_Toilet...|3|5|74;Railing - 1_-5...|1|5|76;Railing - 1_-5...|1|5|76;Railing - 1_-5...|1|1|76`.split(';').map(r=>r.split('|'));
for(let i=0;i<11;i++)SY.push(['Railing - 8 x ...','1','1','74']);
def('sp-symbols',PB+`:host{display:flex;flex-direction:column;width:191px}.m{display:flex;height:650px;flex:none}.l{width:175px;overflow:hidden;color:#222}.sc{width:16px;background:#f0f0f0}.sc i{display:block;width:2px;height:291px;margin:17px 0 0 8px;background:#858585}.r{display:flex;height:17px;align-items:center}.r>div{flex:none}.hd{height:19px;line-height:20px;color:#000}`,
`<div class="m"><div class="l"><div class="hd"><span style="width:99px">Name</span><span style="width:50px">Count</span><span style="width:26px;border:0">${fit(0,21,'Elem')}</span></div>${SY.map(r=>`<div class="r"><sp-icon n="sym" s="16" style="margin:0 2px 0 1px"></sp-icon><div style="width:86px">${fit(0,+r[3],r[0])}</div><div style="width:50px">${fit(0,r[1].length*6.1,r[1])}</div>${fit(0,r[2].length*6.1,r[2])}</div>`).join('')}<sp-icon n="sym" s="16" style="margin-left:1px"></sp-icon></div><div class="sc"><i></i></div></div>
<sp-hscroll a="17" l="123"></sp-hscroll><svg width="191" height="96" viewBox="426 871 191 96" style="display:block" shape-rendering="crispEdges"><g fill="none" stroke="#804000"><path d="M439.500 875.500H606.500V962H439.500ZM440 877.500H606M441.500 876V960M604.500 876V960"/><path d="M485 961V891.500H561V960" stroke-width="1.500"/><path d="M441 960.500H485M561 960.500H605" stroke-width="3"/><path d="M457 962H470M576 962H589" stroke-width="3"/><path d="M442 878H452V888H442ZM594 878H604V888H594ZM442 949H452V959H442ZM594 949H604V959H594Z" stroke-width="2"/><path d="M442 878L452 888M452 878L442 888M594 878L604 888M604 878L594 888M442 949L452 959M452 949L442 959M594 949L604 959M604 949L594 959M448 879L602 955M598 879L448 955M450 879L561 891L596 952M596 879L485 891L450 952M452 882L485 891M594 882L561 891"/><path d="M440.500 880V918M605.500 920V962" stroke-width="3"/></g></svg>`);
def('sp-select',PB+':host{display:flex;flex-direction:column;width:168px}.w{height:684px;flex:none}',
`<div class="tb"><sp-icon n="bulb" style="margin-left:8px"></sp-icon><sp-icon n="bulb2" style="margin-left:12px"></sp-icon><div class="btn" style="width:43px;margin-left:7px"><sp-icon n="fg"></sp-icon></div><sp-icon n="fy" style="margin-left:6px"></sp-icon></div><div class="hd"><span style="width:134px">${fit(0,41,'Element')}</span><span style="border:0;padding-left:8px">${fit(0,26,'Coun')}</span></div><div class="w"></div><sp-hscroll a="17" l="126"></sp-hscroll>`);
const cb=(on)=>`<span class="cb">${on?'<svg width="11" height="11"><path d="M2 5L4.500 8.500L9.500 2" fill="none" stroke="#111" stroke-width="2.200"/></svg>':''}</span>`;
def('sp-parts',`:host{display:flex;flex-direction:column;height:763px;background:#1b2136;font-family:"Open Sans",sans-serif;color:#fff;font-size:13px;padding:10px 10px 0 10px;box-sizing:border-box;width:276px}
.b{background:#048aee;border-radius:4px;display:flex;align-items:center;justify-content:center;font-weight:600;height:32px;flex:none}.row{display:flex;padding-left:5px;margin-bottom:8px;height:32px}.v{width:3px;height:30px;border:solid #49506a;border-width:0 1px;margin-top:1px}
.n{display:flex;align-items:center;height:38.700px;flex:none;font-weight:600;color:#a9b6d8}.cp{background:#020206;color:#fff;height:40px;width:82px;display:flex;align-items:center;justify-content:center;border-radius:4px 4px 0 0;border:1px solid #2c3040;border-bottom:0;box-sizing:border-box}
.f{display:flex;background:#020206;height:413px;width:256px;box-shadow:0 0 6px #2c3a5c;flex:none;margin-top:5px}.l{width:210px;display:flex;flex-direction:column;padding-left:10px;box-sizing:border-box}.s{height:31px;width:190px;box-sizing:border-box;background:#fff;border-radius:3px;box-shadow:inset 0 1px 3px #9bf;color:#aaa;font-size:14px;display:flex;align-items:center;padding:2px 0 0 11px;margin-top:15px}
.mid{display:flex;border-top:1px solid #2d3c68;border-bottom:1px solid #2d3c68;height:259px;margin-top:10px}.ls{width:183px}.sb{width:17px;background:#f0f0f0;display:flex;flex-direction:column;align-items:center}.th{width:15px;height:100px;background:#cdcdcd}
.g{display:flex;justify-content:space-between;color:#7f9cc9;font-size:10.500px;font-weight:600;height:35px;align-items:center;padding-right:11px}.c{display:flex;height:26.300px;align-items:center;font-size:13px}.cb{width:13px;height:13px;box-sizing:border-box;background:#fff;border:1px solid #777;display:block;margin-right:8px;margin-top:-4px}.c u{text-decoration:none;background:#265a80;font-size:10.500px;font-weight:700;border-radius:7px;line-height:12px;padding:0 4px;margin-left:5px}.k{color:#3f9cf0}
.card{width:36px;height:393px;margin-top:10px;background:#1b2136;border:1px solid #26345c;border-right:0;border-radius:4px 0 0 4px;box-sizing:border-box;overflow:hidden;display:flex;flex-direction:column;align-items:flex-end}`,
`<div class="row"><div class="b" style="width:127px;font-size:21px">${fit(0,107,'Download')}</div><div class="v" style="margin-left:20px"></div></div>
<div class="row"><div class="b" style="width:100px;font-size:21px">${fit(0,80,'Profiles')}</div><div class="v" style="margin-left:20px"></div><div class="b" style="width:98px;margin-left:28px;font-size:18px">${fit(0,71,'Support')}</div></div>
<div class="n" style="height:40px;color:#fff">${fit(0,64,'New Parts','margin-left:11px')}<div class="cp" style="margin-left:13px">${fit(0,62,'Couplings')}</div>${fit(0,46,'Fittings','margin-left:15px;color:#a9b6d8')}</div>
<div class="n">${flow(804,[['t',815,897,'Hanger Parts'],['t',921,983,'Hardware']])}</div><div class="n">${flow(804,[['t',815,863,'Nozzles'],['t',887,914,'Pipe'],['t',938,1015,'Pipe Outlets']])}</div><div class="n">${flow(804,[['t',815,878.500,'Sprinklers'],['t',902,985.500,'Sway Bracing'],['t',1009,1038,'Trim']])}</div><div class="n">${flow(804,[['t',815,855,'Valves'],['t',879,910,'FDCs']])}</div>
<div class="n" style="height:50px;line-height:19px;padding:5px 0 0 11px;box-sizing:border-box;flex-direction:column;align-items:flex-start;justify-content:center">${fit(0,163,'Flexible Sprinkler Hoses &amp;')}${fit(0,73,'Accessories')}</div>
<div class="f"><div class="l"><div style="display:flex;justify-content:space-between;align-items:center;width:190px;height:19px;margin-top:10px;font-weight:600">${fit(0,41,'Filters')}<div class="b" style="height:19px;width:45px;font-size:14px">${fit(0,38,'Reset')}</div></div><div class="s">${fit(0,95,'Search by Text')}</div>
<div class="mid"><div class="ls"><div class="g" style="height:34px">${fit(0,44,'REGION')}<span>+</span></div><div class="g">${fit(0,42,'ORIGIN')}<span>+</span></div><div class="g" style="margin-bottom:-4px">${fit(0,93,'MANUFACTURER')}<span>−</span></div>${[['All',14],['Anvil',27,26],['Argco',32,6],['Generic',44,11],['Reliable',44,10],['Shurjoint',52,12]].map((a,i)=>`<div class="c">${cb(!i)}${fit(0,a[1],a[0])}${a[2]?`<u>${a[2]}</u>`:''}</div>`).join('')}</div><div class="sb"><svg width="17" height="34"><path d="M3 25L8.500 19L14 25" fill="none" stroke="#555" stroke-width="3"/></svg><div class="th"></div><svg width="17" height="20" style="margin-top:93px"><path d="M3 7L8.500 13L14 7" fill="none" stroke="#555" stroke-width="3"/></svg></div></div>
<div class="c k" style="margin-top:4px">${cb()}${fit(0,86,'Metric Display')}</div><div class="c k">${cb()}${fit(0,71,'Use Staging')}</div></div>
<div class="card"><div style="width:10px;height:31px;background:#fff;border-radius:3px 0 0 3px;margin-top:10px;flex:none"></div><div style="width:25px;height:73px;background:#232d4e;border-bottom:2px solid #33426e;margin-top:75px;box-sizing:border-box;display:flex;align-items:flex-end;justify-content:flex-end;flex:none"><div style="width:20px;height:25px;box-sizing:border-box;background:#303234;border:4px solid #e4eadb;border-right:0;margin-bottom:8px"></div></div>${[26,53,53].map(m=>`<span class="cb" style="margin:${m}px 1px 0 0;flex:none"></span>`).join('')}</div></div>`);

/* model view: isometric building over sloped terrain */
const Q=(pts,f)=>`<polygon points="${pts}" fill="${f}"/>`;
const B='#4545ff',D='#242498',L1='#4a4aff',L2='#4e4eff',L3='#5151ff';
const ticks=(x,y,w,h,n,s=0)=>{let o='';for(let i=0;i<n;i++){const a=x+i*w/n,yy=y+s*i/n;o+=Q(`${a},${yy} ${a+w/n},${yy} ${a+w/n*.7},${yy+h*(.55+.45*((i*7)%5)/4)} ${a+w/n*.3},${yy+h*.5}`,D)}return o};
/* web truss: two dotted chords with paired diagonals */
const truss=(x1,y1,x2,y2,h)=>{const n=Math.max(1,Math.round((x2-x1)/85)),X=t=>x1+(x2-x1)*t,Y=t=>y1+(y2-y1)*t;let d='';
 for(let i=0;i<n;i++){const a=(i+.05)/n,c=(i+.45)/n,g=(i+.8)/n;d+=`M${X(a)} ${Y(a)}L${X(c)} ${Y(c)+h*.8}M${X(a)+8} ${Y(a)+4}L${X(c)+8} ${Y(c)+h*.8}M${X(c)} ${Y(c)+h*.8}L${X(g)} ${Y(g)}`}
 return `<path d="M${x1} ${y1}L${x2} ${y2}M${x1+24} ${y1+h+8}L${x2-10} ${y2+10}" stroke="#2828a4" stroke-width="3" stroke-dasharray="4 2" fill="none"/><path d="${d}" stroke="#2828a4" stroke-width="2.500" fill="none"/>`};
const SCENE=
Q('495,0 590,0 420,300 45,930 330,380','#4242fb')+
'<path d="M750 0L960 125M1350 0L1524 110M5 970L45 930M1524 770L1495 810L1436 1080L1300 1265L960 1535L940 1568M1430 320L1524 350M1450 385L1524 425M1436 1080L1524 1140" fill="none" stroke="#4242fa" stroke-width="2"/>'+
Q('230,583 516,217 516,405 430,500 390,548 322,628 245,583',L2)+Q('230,583 386,672 386,690 230,855',L1)+Q('516,217 780,375 780,400 740,440 516,405',L1)+Q('516,247 645,325 575,435 516,400','#4848ff')+
Q('230,583 386,665 386,690 230,610','#4d4dff')+
Q('166,947 533,1167 533,1484 166,1262','#4d4dff')+Q('533,1167 709,933 709,1248 533,1484','#5252ff')+Q('709,933 917,1052 917,1368 709,1248','#4b4bff')+
`<path d="M917 1052L1290 540L1380 410Q1418 340 1418 290L1428 320V645Q1420 690 1400 720L917 1368Z" fill="#5252ff"/>`+
Q('1340,462 1360,435 1360,770 1340,795','#5555ff')+Q('1360,435 1380,410 1380,740 1360,770','#5757ff')+Q('1380,410 1396,380 1396,720 1380,740','#5454ff')+Q('1396,380 1428,310 1428,645 1396,720','#4f4fff')+
'<path d="M935 170Q1010 57 1160 54Q1310 55 1385 165Q1430 240 1414 330Q1400 385 1290 540L1055 485L850 310V290Z" fill="#5252ff"/>'+
'<path d="M945 170Q985 110 1050 80V235Q985 265 945 325Z" fill="#5656ff"/><path d="M1050 90Q1160 50 1280 90V255Q1160 210 1050 240Z" fill="#5b5bff"/><path d="M1085 135H1200V230H1085Z" fill="#6060ff"/>'+
'<path d="M780 375L940 160V190L790 397L780 400Z" fill="#4e4eff"/><path d="M850 310L940 190V325L905 350Z" fill="#4a4aff"/>'+
'<path d="M945 330Q1020 240 1160 230Q1330 240 1400 370L1290 540L1055 485Z" fill="#5252ff"/>'+
'<path d="M1010 410Q1060 375 1160 375Q1260 390 1345 450L1285 540L1055 485Z" fill="#4545ff"/>'+
Q('1018,112 1060,96 1060,120 1045,150 1036,165 1030,168 1026,130 1018,150',D)+
Q('1097,86 1155,78 1155,90 1097,98',D)+ticks(1097,92,58,52,8,-6)+Q('1191,80 1248,95 1248,108 1191,92',D)+ticks(1191,88,56,54,8,12)+Q('1282,108 1314,122 1314,140 1282,125',D)+ticks(1282,120,34,60,5,10)+
ticks(1015,245,46,66,7)+ticks(1097,232,54,66,8)+ticks(1191,232,50,58,7)+ticks(1105,208,52,28,6)+ticks(1200,210,36,22,5)+
/* shaded far side of the drum */
'<path d="M1302 93Q1370 130 1400 200Q1424 280 1414 335Q1405 370 1380 410V315L1318 272V190L1302 140Z" fill="#242498"/><path d="M1318 335L1380 380V412L1352 445L1335 425V390H1318Z" fill="#242498"/><path d="M1282 180L1300 130V262L1272 245Z" fill="#242498"/><path d="M1287 190V250M1293 200V256" stroke="#5252ff" stroke-width="5"/>'+
'<path d="M1361 165V290M1368 180V300M1377 215V250" stroke="#4545ff" stroke-width="2" stroke-dasharray="22 6"/>'+
`<path d="M1019 150V240M1051 160V230M1143 140V215M1202 145V210M1023 250V320M1080 260V240M1143 290V350M1018 300V350M1052 290V320M1318 280V400" stroke="${D}" stroke-width="3"/>`+
'<path d="M948 325Q1020 235 1160 229Q1300 235 1355 300Q1390 340 1400 375" fill="none" stroke="#4343ee" stroke-width="5"/>'+
Q('1080,205 1108,198 1108,235 1080,242','#4848ff')+Q('1140,205 1166,198 1166,235 1140,238','#4848ff')+
truss(945,332,1245,537,55)+truss(1005,280,1330,475,48)+truss(1085,245,1370,420,42)+truss(1240,248,1395,370,30)+truss(1055,487,1095,515,14)+
'<ellipse cx="1238" cy="326" rx="62" ry="54" fill="#2a2aa8" stroke="#2a2aa8" stroke-width="6" stroke-dasharray="14 12"/><ellipse cx="1238" cy="322" rx="59" ry="50" fill="#4747ff"/>'+
Q('1265,497 1288,495 1288,535 1265,522','#5e5eff')+
/* roof deck */
Q('166,947 386,665 515,505 660,335 790,400 830,345 1000,440 1055,485 1290,540 917,1052 709,933 533,1167',B)+
/* inner partitions */
[['186,943 386,690 386,720 215,962',L1],['166,947 533,1167 533,1200 166,980','#4a4aff'],['533,1167 709,933 709,965 533,1200','#4e4eff'],['709,933 917,1052 910,1085 709,965','#4848ff'],
['335,1035 490,825 510,845 360,1050',L2],['247,890 365,965 360,980 247,915',L1],['322,795 440,865 430,885 322,820',L1],['390,698 510,768 500,790 390,725',L1],['462,605 585,675 575,692 462,628',L1],['368,450 505,530 480,558 368,492',L1],['322,512 390,550 322,628','#4848ff'],
['516,530 658,335 658,370 510,575',L2],['658,355 790,410 750,435 658,372',L1],['583,585 697,428 697,465 600,590',L2],['697,428 745,455 730,475 697,465',L1],['577,585 850,740 830,770 577,615',L1],['740,465 965,590 945,612 740,490',L1],['815,360 1035,480 1010,517 815,400',L1],['800,380 822,355 600,690 590,690',L2],['790,400 800,395 600,665 500,815 490,815',L1],
['500,815 580,705 600,715 515,825',L2],['580,705 790,825 785,832 580,712',L1],['850,315 1010,410 1005,450 850,345','#4848ff'],['1035,510 1235,610 1215,637 1035,530',L1],['1055,485 1080,500 1270,565 1235,608','#4848ff'],['1040,490 1055,485 860,755 850,775 ',L2],['893,790 1027,615 1027,655 910,810',L3],['845,775 1030,885 1015,903 845,800',L1],['780,860 965,970 950,993 780,885',L1],['728,930 850,770 870,780 740,937',L1],['788,930 820,895 820,925 788,960',L2],['832,880 860,840 860,870 845,888',L2],['580,855 603,825 603,848 590,865',L2],['603,825 727,900 715,918 603,850',L1],['487,825 685,940 680,948 487,835',L1],['465,1015 575,875 578,885 480,1020',L2],['532,920 650,990 640,1010 532,945',L1],['460,1015 578,1085 565,1105 460,1045',L1],['413,1080 460,1017 460,1045 428,1090',L2],['1090,520 1123,480 1123,535 1110,530',L3],['430,455 447,400 447,440 430,468',L1],['462,405 480,350 480,395 462,418','#4848ff'],['440,490 516,400 516,415 450,498','#4a4aff'],['386,668 406,672 400,690 390,698',L2]].map(a=>Q(...a)).join('')+
'<path d="M780 375L940 185M186 943L390 680M335 1035L500 830M600 690L800 395M860 755L1055 485M917 1052L1290 540M360 765L445 812L468 772M432 670L515 715L543 675M270 878L360 925L348 940M630 925L670 945M535 1055L548 1040L590 1065" fill="none" stroke="#4a4af8" stroke-width="2"/>'+
/* openings */
['326,1130 359,1147 359,1196 326,1178','231,1217 264,1235 264,1285 231,1267','312,1265 385,1309 385,1395 312,1352','427,1336 460,1355 460,1404 427,1385','574,1193 597,1168 597,1214 574,1243','574,1340 595,1315 595,1360 574,1389','645,1097 669,1070 669,1117 645,1146','651,1237 675,1209 675,1255 651,1287','685,1045 707,1018 707,1062 685,1090','1211,741 1235,713 1235,783 1211,813','1211,887 1235,857 1235,932 1211,960','1088,908 1111,879 1111,948 1088,980','1088,1054 1111,1024 1111,1096 1088,1128','1141,980 1191,915 1191,1002 1141,1068','391,599 424,618 424,628 391,670','568,334 574,336 574,374 568,379','1427,400 1430,400 1430,445 1427,445','1424,580 1429,600 1424,655'].map(p=>Q(p,D)).join('')+
'<path d="M315 1267V1352M234 1218V1267" stroke="#5050ff"/>';
def('sp-view',`:host{display:flex;flex-direction:column;width:798px;height:783px;${FONT}background:#535353}
.tabs{display:flex;height:22px;line-height:22px;color:#fff;flex:none;align-items:center}.fr{display:flex;flex-direction:column;height:761px;box-sizing:border-box;border:2px solid #f1f1f1;border-right-width:3px;border-bottom-width:4px;background:#fff;padding:0 1px 0 0}
.in{display:flex;flex-direction:column;border:solid #777;border-width:2px 0 0 3px;outline:1px solid #999;outline-offset:-1px;margin:0 2px 0 2px;flex:none}.top{display:flex;height:715px;overflow:hidden}.vs{width:17px;background:#f0f0f0;display:flex;align-items:center;justify-content:center}.vs i{width:2px;height:17px;background:#858585;margin-top:-38px}
.sh{display:flex;height:18px;background:#757575;border-top:1px solid #555;box-sizing:border-box;font-size:11.500px;line-height:17px;align-items:center}.nv{display:flex;gap:1px;margin-left:-1px}.nv svg{background:#f0f0f0;border:1px solid #aaa;box-sizing:border-box}`,
`<div class="tabs">${flow(1074,[['t',1082,1138,'Drawing11'],['t',1151,1207,'Drawing12'],['t',1220,1276,'Drawing13'],['t',1289,1317,'Drawi']])}<svg width="24" height="12" style="margin-left:auto;margin-right:6px"><path d="M5 1V11L0 6ZM19 1V11L24 6Z" fill="none" stroke="#3c3c3c"/></svg></div>
<div class="fr"><div class="in"><div class="top"><svg width="767" height="715" style="background:#4545ff;flex:none" shape-rendering="crispEdges"><g transform="translate(-1 70) scale(.50378 .39541)">${SCENE}</g></svg><div class="vs"><i></i></div></div><sp-hscroll a="408" l="17"></sp-hscroll>
<div class="sh"><div class="nv">${['M5 4V12M11 4L7 8L11 12Z','M9 4L5 8L9 12Z','M6 4L10 8L6 12Z','M4 4L8 8L4 12ZM10 4V12'].map(d=>`<svg width="15" height="16"><path d="${d}" stroke="#555" fill="#555" transform="translate(0 -1)"/></svg>`).join('')}</div>
<div style="width:51px;height:17px;background:#fff;clip-path:polygon(0 0,100% 0,85% 100%,0 100%);margin-left:4px;display:flex;justify-content:center;font-weight:700;font-size:12px">${fit(0,34,'Model','margin-left:-3px')}</div><div style="width:64px;height:17px;background:#c3c9cd;clip-path:polygon(12% 0,100% 0,84% 100%,0 100%);display:flex;padding-left:7px;box-sizing:border-box;margin-left:-4px">${fit(0,43,'*Sheet 1')}</div></div></div></div>`);
def('sp-status',`:host{display:flex;height:19px;align-items:center;background:linear-gradient(#3f434e 0 45%,#2c2c2d 50%);${FONT}color:#fff;padding-left:4px;flex:none}.r{display:flex;margin-top:4px;background:linear-gradient(#777,#777) 1466px 2px/1px 13px no-repeat,linear-gradient(#777,#777) 1529px 2px/1px 13px no-repeat,linear-gradient(#777,#777) 1598px 2px/1px 13px no-repeat,linear-gradient(#777,#777) 1632px 2px/1px 13px no-repeat}`,
`${fit(0,206,'Edits properties of the current selection.','margin-top:4px')}<div class="r">${flow(210,[['t',1605,1674,'4618 selected'],['t',1686,1738,"Elev1: 0'-0"],['t',1749,1806,'ø 2 (2.0670)'],['t',1813,1839.500,'# Off'],['t',1846,1870,'Foot']])}</div>`);

const vi=(m,n)=>`<sp-icon n="${n}" style="margin:${m}px 0 0 0"></sp-icon>`;
def('sp-side',`:host{display:flex;flex-direction:column;width:48px;height:802px;flex:none;${FONT}color:#111}.s{display:flex;flex-direction:column;align-items:center;background:linear-gradient(90deg,#cfd2d6,#8f96a0);border-left:1px solid #777;box-sizing:border-box;flex:none}.g{height:3px;width:31px;flex:none;margin-top:4px;background:repeating-linear-gradient(90deg,#333 0 2px,transparent 2px 4px)}
.o{height:21px;background:linear-gradient(90deg,#555b66,#a8adb5);display:flex;align-items:center;justify-content:flex-end;gap:4px;padding-right:4px;flex:none}.o i{width:2px;height:9px;background:#fff}.o b{border:5px solid transparent;border-left:6px solid #f3f3f3;border-right:0}.v{writing-mode:vertical-rl;font:12px/16px "Open Sans",sans-serif}${BTN}.ln{width:28px;height:1px;background:#555;border-bottom:1px solid #eee;flex:none}.btn{width:44px}`,
`<div class="s" style="height:211px"><div class="g"></div><div class="v" style="margin-top:9px;height:65px">${fit(0,65,'Import DWG','','v')}</div>${vi(8,'dwg')}${vi(10,'docs')}${vi(10,'cubes')}</div><div class="o" style="margin-top:1px"><i></i><b></b></div>
<div class="s" style="height:321px"><div class="g"></div>${vi(9,'s1')}${vi(10,'s2')}<div class="ln" style="margin:8px 0 7px"></div><sp-icon n="s3"></sp-icon>${vi(11,'s4')}<div class="ln" style="margin:8px 0 8px"></div><sp-icon n="s5"></sp-icon>${vi(9,'s6')}${vi(12,'s7')}</div><div class="o"><i></i><b></b></div>
<div class="s" style="height:198px"><div class="g"></div><div class="btn" style="margin-top:4px"><sp-icon n="solid"></sp-icon></div>${vi(6,'wire')}<div class="v" style="margin-top:11px">${fit(0,30,'GLSL','','v')}</div><div class="btn" style="height:64px;margin-top:3px"><div class="v">${fit(0,55,'OpenGL®','','v')}</div></div></div><div class="o" style="height:26px"><i></i><b></b></div>`);
def('sp-tip',`:host{position:absolute;left:1318px;top:184px;width:192px;height:55px;box-sizing:border-box;border:1px solid #777;background:linear-gradient(#fff,#c9cbd3);${FONT}line-height:13px;color:#4c4c4c;display:flex;padding:3px 5px;gap:6px}b{font-weight:700}`,
`<sp-icon n="props" s="16"></sp-icon><div>${fit(0,123,'<b>Properties... (Alt+Enter)</b>')}${fit(0,155,'Edits properties of the current','margin-top:6px')}${fit(0,48,'selection.')}</div>`);
def('sp-app',':host{display:flex;flex-direction:column;width:1920px;height:1032px;position:relative;background:#535353;overflow:hidden}.mid{display:flex;height:802px}.col{width:1872px}.ws{display:flex;height:783px;background:#535353}',
`<sp-titlebar></sp-titlebar><sp-menubar></sp-menubar>
<sp-band><sp-toolbar n="r1a"></sp-toolbar><sp-toolbar n="r1b"></sp-toolbar></sp-band>
<sp-band><sp-toolbar n="r2"></sp-toolbar></sp-band>
<sp-band><sp-toolbar n="r3a"></sp-toolbar><sp-toolbar n="r3b"></sp-toolbar><sp-toolbar n="r3c"></sp-toolbar><sp-toolbar n="r3d"></sp-toolbar></sp-band>
<div class="mid"><div class="col"><div class="ws">
<sp-panel cap="Layers" cw="31" style="width:220px"><sp-layers></sp-layers></sp-panel>
<sp-panel cap="Alerts" cw="29" style="width:196px;margin-left:5px"><sp-alerts></sp-alerts></sp-panel>
<sp-panel cap="Symbols" cw="42" style="width:191px;margin-left:5px"><sp-symbols></sp-symbols></sp-panel>
<sp-panel cap="Select" cw="30" style="width:168px;margin-left:5px"><sp-select></sp-select></sp-panel>
<sp-panel cap="Parts Picker" cw="58" style="width:276px;margin-left:4px"><sp-parts></sp-parts></sp-panel>
<sp-view style="margin-left:4px"></sp-view></div><sp-status></sp-status></div><sp-side></sp-side></div>
<sp-band><sp-toolbar n="b1"></sp-toolbar><sp-toolbar n="b2"></sp-toolbar><sp-toolbar n="b3"></sp-toolbar></sp-band><sp-tip></sp-tip>`);
</script>
</body>
</html>
